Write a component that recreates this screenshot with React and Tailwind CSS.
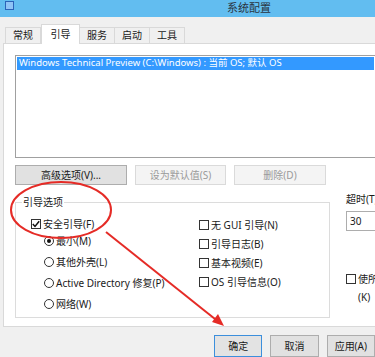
import React from "react";

const FONT = { fontFamily: '"Noto Sans", "Noto Sans CJK SC", sans-serif' };

function Tab({ label, active }) {
  if (active) {
    return (
      <div className="relative z-10 -mb-px flex h-[20px] w-[39px] items-center justify-center border border-b-0 border-[#d9d9d9] bg-white text-[10px] text-[#1a1a1a]">
        {label}
      </div>
    );
  }
  return (
    <div className="-ml-px flex h-[16px] w-[36px] items-center justify-center border border-b-0 border-[#d9d9d9] bg-[#f0f0f0] text-[10px] text-[#1a1a1a] first:ml-0">
      {label}
    </div>
  );
}

function Btn({ children, disabled, primary, className = "" }) {
  return (
    <div
      className={`flex h-[20px] items-center justify-center border text-[10px] ${
        disabled
          ? "border-[#dadada] bg-[#f4f4f4] text-[#9a9a9a]"
          : primary
          ? "border-[#3c8fdc] bg-[#e3e3e3] text-[#1a1a1a]"
          : "border-[#adadad] bg-[#e1e1e1] text-[#1a1a1a]"
      } ${className}`}
    >
      {children}
    </div>
  );
}

function Check({ checked, label }) {
  return (
    <div className="flex h-[14px] items-center gap-[2px] text-[10px] leading-[14px] text-[#1a1a1a]">
      <span className="flex h-[10px] w-[10px] shrink-0 items-center justify-center border border-[#333] bg-white">
        {checked && (
          <svg width="8" height="8" viewBox="0 0 8 8">
            <path d="M0.8 4 L3 6.4 L7.2 1.2" fill="none" stroke="#111" strokeWidth="1.5" />
          </svg>
        )}
      </span>
      <span className="whitespace-nowrap">{label}</span>
    </div>
  );
}

function Radio({ checked, label }) {
  return (
    <div className="flex h-[14px] items-center gap-[2px] text-[10px] leading-[14px] text-[#1a1a1a]">
      <span className="flex h-[10px] w-[10px] shrink-0 items-center justify-center rounded-full border border-[#333] bg-white">
        {checked && <span className="h-[4px] w-[4px] rounded-full bg-[#111]" />}
      </span>
      <span className="whitespace-nowrap">{label}</span>
    </div>
  );
}

export default function App() {
  return (
    <div className="relative h-[357px] w-[375px] overflow-hidden bg-[#f0f0f0]" style={FONT}>
      {/* title bar */}
      <div className="flex h-[17px] items-center bg-[#62bdf0]">
        <div className="ml-[5px] -mt-[6px] h-[9px] w-[9px] border border-[#2b63b8] bg-[#8fc3f5]" />
        <div className="ml-[213px] text-[11px] text-[#2a3440]">系统配置</div>
      </div>

      {/* tabs */}
      <div className="flex h-[26px] items-end pl-[5px]">
        <Tab label="常规" />
        <Tab label="引导" active />
        <Tab label="服务" />
        <Tab label="启动" />
        <Tab label="工具" />
      </div>

      {/* panel */}
      <div className="ml-[3px] h-[284px] border border-r-0 border-[#d9d9d9] bg-white pl-[11px] pt-[11px]">
        <div className="h-[103px] border border-r-0 border-[#a0a0a0] bg-white p-[1px]">
          <div className="flex h-[13px] items-center whitespace-nowrap bg-[#3399ff] pl-[2px] text-[9.5px] text-white">
            Windows Technical Preview (C:\Windows) : 当前 OS; 默认 OS
          </div>
        </div>

        <div className="mt-[7px] flex gap-[8px]">
          <Btn className="w-[112px]">高级选项(V)...</Btn>
          <Btn disabled className="w-[91px]">设为默认值(S)</Btn>
          <Btn disabled className="w-[92px]">删除(D)</Btn>
        </div>

        <div className="mt-[10px] flex">
          <fieldset className="h-[123px] w-[315px] shrink-0 border border-[#dcdcdc] pl-[15px]">
            <legend className="-ml-[9px] px-[1px] text-[10px] leading-[14px] text-[#1a1a1a]">引导选项</legend>
            <div className="flex">
              <div className="flex w-[168px] flex-col">
                <div className="mt-[8px]">
                  <Check checked label="安全引导(F)" />
                </div>
                <div className="ml-[13px] mt-[3px] flex flex-col gap-[7px]">
                  <Radio checked label="最小(M)" />
                  <Radio label="其他外壳(L)" />
                  <Radio label="Active Directory 修复(P)" />
                  <Radio label="网络(W)" />
                </div>
              </div>
              <div className="mt-[9px] flex flex-col gap-[5px]">
                <Check label="无 GUI 引导(N)" />
                <Check label="引导日志(B)" />
                <Check label="基本视频(E)" />
                <Check label="OS 引导信息(O)" />
              </div>
            </div>
          </fieldset>

          <div className="ml-[16px] -mt-[3px] flex shrink-0 flex-col">
            <div className="text-[10px] leading-[14px] text-[#1a1a1a]">超时(T)</div>
            <div className="mt-[5px] flex h-[20px] w-[40px] items-center border border-[#adadad] bg-white pl-[3px] text-[10px] text-[#1a1a1a]">
              30
            </div>
            <div className="mt-[41px]">
              <Check label="使所有" />
            </div>
            <div className="ml-[12px] mt-[4px] text-[10px] leading-[14px] text-[#1a1a1a]">(K)</div>
          </div>
        </div>
      </div>

      {/* bottom buttons */}
      <div className="mt-[8px] flex gap-[8px] pl-[214px]">
        <Btn primary className="h-[22px] w-[64px]">确定</Btn>
        <Btn className="h-[22px] w-[64px]">取消</Btn>
        <Btn className="h-[22px] w-[64px]">应用(A)</Btn>
      </div>

      {/* red annotation */}
      <svg className="pointer-events-none absolute left-0 top-0" width="375" height="357">
        <ellipse cx="61" cy="210" rx="50" ry="28" fill="none" stroke="#e52b26" strokeWidth="2" />
        <line x1="106" y1="232" x2="220" y2="323" stroke="#e52b26" strokeWidth="2" />
        <path d="M224 326 L212 322 L218 314 Z" fill="#e52b26" />
      </svg>
    </div>
  );
}
